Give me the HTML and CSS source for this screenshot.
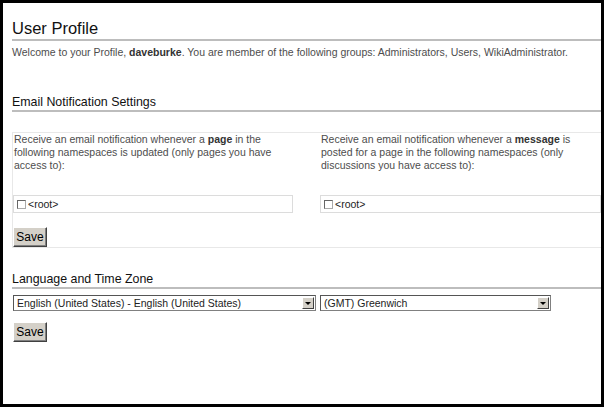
FILE: index.html
```html
<!DOCTYPE html>
<html>
<head>
<meta charset="utf-8">
<link rel="stylesheet" href="styles.css">
</head>
<body>
<div class="frame">
  <h1 class="title">User Profile</h1>
  <p class="welcome">Welcome to your Profile, <b>daveburke</b>. You are member of the following groups: Administrators, Users, WikiAdministrator.</p>

  <h2 class="section email-head">Email Notification Settings</h2>
  <div class="notify">
    <div class="col col-left">
      <p class="desc">Receive an email notification whenever a <b>page</b> in the following namespaces is updated (only pages you have access to):</p>
      <div class="ns"><span class="cb"></span><span class="ns-label">&lt;root&gt;</span></div>
      <button class="btn">Save</button>
    </div>
    <div class="col col-right">
      <p class="desc">Receive an email notification whenever a <b>message</b> is posted for a page in the following namespaces (only discussions you have access to):</p>
      <div class="ns"><span class="cb"></span><span class="ns-label">&lt;root&gt;</span></div>
    </div>
  </div>

  <h2 class="section lang-head">Language and Time Zone</h2>
  <div class="selects">
    <div class="select select-lang"><span class="select-text">English (United States) - English (United States)</span><span class="arrow"></span></div>
    <div class="select select-tz"><span class="select-text">(GMT) Greenwich</span><span class="arrow"></span></div>
  </div>
  <button class="btn btn-lang">Save</button>
</div>
</body>
</html>
```

FILE: styles.css
```css
html, body {
  margin: 0;
  padding: 0;
  background: #fff;
}

.frame {
  box-sizing: border-box;
  width: 604px;
  height: 407px;
  border: 3px solid #000;
  padding: 14px 0 0 9px;
  font-family: "Liberation Sans", Arial, sans-serif;
  color: #4d4d4d;
  overflow: hidden;
}

.title {
  margin: 0;
  font-size: 16.5px;
  line-height: 22px;
  font-weight: normal;
  color: #111;
  border-bottom: 2px solid #bdbdbd;
}

.welcome {
  margin: 5px 0 0 0;
  font-size: 10.5px;
  line-height: 13px;
}

.welcome b {
  color: #333;
}

.section {
  margin: 0;
  font-size: 12.4px;
  line-height: 16px;
  font-weight: normal;
  color: #111;
  border-bottom: 2px solid #bdbdbd;
}

.email-head {
  margin-top: 35px;
}

.lang-head {
  margin-top: 23px;
}

.notify {
  margin-top: 20px;
  display: grid;
  grid-template-columns: 294px 1fr;
  border-top: 1px solid #e8e8e8;
  border-left: 1px solid #e8e8e8;
  border-bottom: 1px solid #e8e8e8;
}

.col-left {
  padding-right: 14px;
}

.col-right {
  padding-left: 13px;
}

.desc {
  margin: 0 0 23px 0;
  font-size: 10.5px;
  line-height: 13px;
  padding-left: 1px;
}

.desc b {
  color: #333;
}

.ns {
  box-sizing: border-box;
  height: 18px;
  border: 1px solid #dcdcdc;
  display: flex;
  align-items: center;
  padding-left: 3px;
  font-size: 10.5px;
  color: #222;
}

.col-left .ns {
  margin-bottom: 14px;
}

.cb {
  box-sizing: border-box;
  width: 9px;
  height: 9px;
  border: 1px solid #666;
  border-right-color: #aaa;
  border-bottom-color: #aaa;
  background: #fff;
  margin-right: 2px;
}

.btn {
  box-sizing: border-box;
  display: block;
  width: 34px;
  height: 20px;
  margin: 0;
  padding: 0;
  background: #d4d0c8;
  border: 1px solid;
  border-color: #fff #404040 #404040 #fff;
  box-shadow: inset -1px -1px 0 #808080;
  font-family: "Liberation Sans", Arial, sans-serif;
  font-size: 12px;
  color: #000;
}

.selects {
  margin-top: 6px;
  display: flex;
  gap: 4px;
  padding-left: 1px;
}

.select {
  box-sizing: border-box;
  height: 16px;
  border: 1px solid #808080;
  border-top-color: #555;
  border-left-color: #555;
  display: flex;
  align-items: center;
  justify-content: space-between;
  padding: 0 1px 0 3px;
  font-size: 10.5px;
  color: #222;
  background: #fff;
}

.select-lang {
  width: 303px;
}

.select-tz {
  width: 231px;
}

.arrow {
  box-sizing: border-box;
  width: 12px;
  height: 12px;
  background: #d4d0c8;
  border: 1px solid;
  border-color: #fff #404040 #404040 #fff;
  position: relative;
}

.arrow::after {
  content: "";
  position: absolute;
  left: 2px;
  top: 4px;
  border-left: 3px solid transparent;
  border-right: 3px solid transparent;
  border-top: 3px solid #000;
}

.btn-lang {
  margin-top: 11px;
  margin-left: 1px;
}
```
